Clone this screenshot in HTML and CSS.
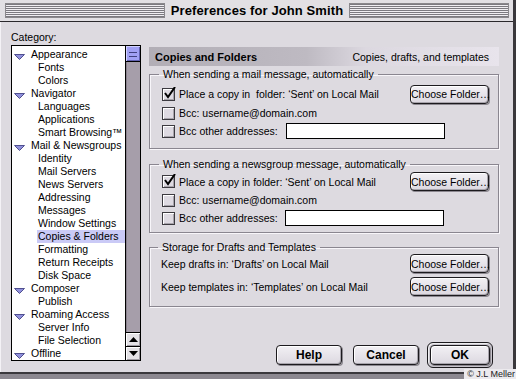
FILE: index.html
```html
<!DOCTYPE html>
<html lang="en">
<head>
  <meta charset="UTF-8">
  <title>Preferences for John Smith</title>
  <link rel="stylesheet" href="styles.css">
</head>
<body>
  <div class="window">
    <div class="titlebar">
      <span class="stripes"></span>
      <span class="title">Preferences for John Smith</span>
      <span class="stripes"></span>
    </div>

    <div class="main">
      <!-- Category tree -->
      <div class="sidebar">
        <div class="cat-label">Category:</div>
        <div class="listbox">
          <ul class="tree">
            <li class="parent"><svg class="twisty" viewBox="0 0 11 6"><path d="M0.5 0.5 H10.5 L5.5 5.5 Z"/></svg>Appearance</li>
            <li class="child"><span>Fonts</span></li>
            <li class="child"><span>Colors</span></li>
            <li class="parent"><svg class="twisty" viewBox="0 0 11 6"><path d="M0.5 0.5 H10.5 L5.5 5.5 Z"/></svg>Navigator</li>
            <li class="child"><span>Languages</span></li>
            <li class="child"><span>Applications</span></li>
            <li class="child"><span>Smart Browsing™</span></li>
            <li class="parent"><svg class="twisty" viewBox="0 0 11 6"><path d="M0.5 0.5 H10.5 L5.5 5.5 Z"/></svg>Mail &amp; Newsgroups</li>
            <li class="child"><span>Identity</span></li>
            <li class="child"><span>Mail Servers</span></li>
            <li class="child"><span>News Servers</span></li>
            <li class="child"><span>Addressing</span></li>
            <li class="child"><span>Messages</span></li>
            <li class="child"><span>Window Settings</span></li>
            <li class="child selected"><span>Copies &amp; Folders</span></li>
            <li class="child"><span>Formatting</span></li>
            <li class="child"><span>Return Receipts</span></li>
            <li class="child"><span>Disk Space</span></li>
            <li class="parent"><svg class="twisty" viewBox="0 0 11 6"><path d="M0.5 0.5 H10.5 L5.5 5.5 Z"/></svg>Composer</li>
            <li class="child"><span>Publish</span></li>
            <li class="parent"><svg class="twisty" viewBox="0 0 11 6"><path d="M0.5 0.5 H10.5 L5.5 5.5 Z"/></svg>Roaming Access</li>
            <li class="child"><span>Server Info</span></li>
            <li class="child"><span>File Selection</span></li>
            <li class="parent"><svg class="twisty" viewBox="0 0 11 6"><path d="M0.5 0.5 H10.5 L5.5 5.5 Z"/></svg>Offline</li>
          </ul>
          <div class="scrollbar">
            <div class="thumb"></div>
            <div class="track"></div>
            <div class="arrow"><svg viewBox="0 0 9 5"><path d="M4.5 0 L9 5 H0 Z"/></svg></div>
            <div class="arrow"><svg viewBox="0 0 9 5"><path d="M0 0 H9 L4.5 5 Z"/></svg></div>
          </div>
        </div>
      </div>

      <!-- Settings panel -->
      <div class="panel">
        <div class="panel-head">
          <span class="head-title">Copies and Folders</span>
          <span class="head-sub">Copies, drafts, and templates</span>
        </div>

        <fieldset class="group mail">
          <legend>When sending a mail message, automatically</legend>
          <div class="row row-btn">
            <span class="check on"><svg viewBox="0 0 13 13"><path d="M2 6 L5 10 L12 0"/></svg></span>
            <span class="label">Place a copy in&nbsp; folder: ‘Sent’ on Local Mail</span>
            <button class="btn">Choose Folder…</button>
          </div>
          <div class="row">
            <span class="check"></span>
            <span class="label">Bcc: username@domain.com</span>
          </div>
          <div class="row">
            <span class="check"></span>
            <span class="label">Bcc other addresses:</span>
            <span class="field"></span>
          </div>
        </fieldset>

        <fieldset class="group news">
          <legend>When sending a newsgroup message, automatically</legend>
          <div class="row row-btn">
            <span class="check on"><svg viewBox="0 0 13 13"><path d="M2 6 L5 10 L12 0"/></svg></span>
            <span class="label">Place a copy in folder: ‘Sent’ on Local Mail</span>
            <button class="btn">Choose Folder…</button>
          </div>
          <div class="row">
            <span class="check"></span>
            <span class="label">Bcc: username@domain.com</span>
          </div>
          <div class="row">
            <span class="check"></span>
            <span class="label">Bcc other addresses:</span>
            <span class="field field-2"></span>
          </div>
        </fieldset>

        <fieldset class="group storage">
          <legend>Storage for Drafts and Templates</legend>
          <div class="row row-btn">
            <span class="label">Keep drafts in: ‘Drafts’ on Local Mail</span>
            <button class="btn">Choose Folder…</button>
          </div>
          <div class="row row-btn">
            <span class="label">Keep templates in: ‘Templates’ on Local Mail</span>
            <button class="btn">Choose Folder…</button>
          </div>
        </fieldset>

        <div class="actions">
          <button class="btn big">Help</button>
          <button class="btn big">Cancel</button>
          <span class="default-ring"><button class="btn big">OK</button></span>
        </div>
      </div>
    </div>
  </div>
  <div class="credit">© J.L Meller</div>
</body>
</html>
```

FILE: styles.css
```css
body {
  margin: 0;
  width: 516px;
  height: 379px;
  background: #8c8890;
  font-family: "Liberation Sans", Arial, sans-serif;
  font-size: 10.5px;
  color: #000;
  overflow: hidden;
  position: relative;
}
.window {
  width: 513px;
  height: 372px;
  background: #dddae0;
  border-right: 3px solid #3a383c;
  border-bottom: 2px solid #3a383c;
  box-shadow: inset 1px 1px 0 #f4f2f6;
  overflow: hidden;
}

/* title bar */
.titlebar {
  height: 21px;
  border-bottom: 1px solid #2a282c;
  display: flex;
  align-items: center;
  gap: 6px;
  padding: 0 4px 0 5px;
  background: #e2e0e4;
}
.stripes {
  flex: 1;
  height: 15px;
  background: repeating-linear-gradient(to bottom, #7c7a80 0 1px, #f0eef2 1px 2px);
  border: 1px solid #8a888c;
  box-sizing: border-box;
}
.title {
  font-weight: bold;
  font-size: 13px;
  letter-spacing: 0.1px;
}

.main {
  display: flex;
  padding: 9px 0 0 11px;
}

/* category tree */
.sidebar {
  width: 130px;
}
.cat-label {
  line-height: 13px;
  height: 13px;
}
.listbox {
  margin-top: 1px;
  height: 314px;
  border: 1px solid #000;
  background: #fff;
  display: flex;
}
.tree {
  list-style: none;
  margin: 0;
  padding: 2px 0 0;
  flex: 1;
}
.tree li {
  height: 13px;
  line-height: 13px;
  white-space: nowrap;
}
.parent {
  padding-left: 2px;
  display: flex;
  align-items: center;
}
.twisty {
  width: 11px;
  height: 6px;
  margin: 4px 6px 0 0;
  fill: #9090dc;
  stroke: #505090;
  stroke-width: 1;
}
.child span {
  display: block;
  margin-left: 25px;
  padding-left: 1px;
}
.child.selected span {
  background: #cacaf6;
}

.scrollbar {
  width: 14px;
  border-left: 1px solid #000;
  display: flex;
  flex-direction: column;
  background: #a69eaa;
}
.thumb {
  height: 15px;
  border-bottom: 1px solid #000;
  background: repeating-linear-gradient(to bottom, #a0a0f4 0 3px, #404080 3px 4px) 3px 3px / 8px 9px no-repeat, #a0a0f4;
  box-shadow: inset 1px 1px 0 #d0d0ff, inset -1px -1px 0 #6060b0;
}
.track {
  flex: 1;
  box-shadow: inset 1px 0 0 #8a828e;
}
.arrow {
  height: 13px;
  border-top: 1px solid #000;
  background: #e4e2e6;
  box-shadow: inset 1px 1px 0 #fff, inset -1px -1px 0 #a09ca4;
  display: flex;
  align-items: center;
  justify-content: center;
}
.arrow svg {
  width: 9px;
  height: 5px;
  fill: #000;
}

/* right panel */
.panel {
  width: 350px;
  margin: 16px 0 0 8px;
}
.panel-head {
  height: 19px;
  display: flex;
  align-items: center;
  justify-content: space-between;
  padding: 0 10px 0 6px;
  background: linear-gradient(to right, #b2aeb6, #bebac2 45%, #dcd8e0 62%, #e8e4ec);
}
.head-title {
  font-weight: bold;
  font-size: 11px;
}

.group {
  margin: 2px 0 0;
  padding: 0 9px 0 12px;
  border: 1px solid #8a8690;
  box-shadow: inset 1px 1px 0 #f8f6fa, 1px 1px 0 #f8f6fa;
}
.group legend {
  padding: 0 4px;
  margin-left: -3px;
  line-height: 13px;
  height: 13px;
}
.row {
  display: flex;
  align-items: center;
  height: 18px;
}
.row-btn {
  height: 20px;
  margin-top: 3px;
}
.mail > .row:last-child {
  margin-bottom: 8px;
}

.news {
  margin-top: 9px;
}
.news .row-btn {
  height: 19px;
  margin-top: 1px;
}
.news > .row:last-child {
  margin-bottom: 5px;
}

.storage {
  margin-top: 8px;
  padding-left: 11px;
}
.storage .row-btn {
  height: 19px;
  margin-top: 0;
}
.storage .row-btn + .row-btn {
  margin-top: 4px;
}
.storage > .row:last-child {
  margin-bottom: 10px;
}

.check {
  width: 11px;
  height: 11px;
  border: 1px solid #3c3a40;
  background: #dedae2;
  box-shadow: inset 1px 1px 0 #fff, inset -1px -1px 0 #a8a4ac;
  margin-right: 4px;
  position: relative;
}
.check svg {
  position: absolute;
  left: 0;
  top: -2px;
  width: 13px;
  height: 13px;
  fill: none;
  stroke: #000;
  stroke-width: 2;
}
.label {
  white-space: nowrap;
}
.field {
  width: 157px;
  height: 14px;
  margin-left: 8px;
  background: #fff;
  border: 1px solid #000;
}
.field-2 {
  margin-left: 7px;
}

/* buttons */
.btn {
  margin-left: auto;
  width: 79px;
  height: 19px;
  padding: 0;
  white-space: nowrap;
  font-family: "Liberation Sans", Arial, sans-serif;
  font-size: 10.5px;
  color: #000;
  border: 1px solid #1c1a1e;
  border-radius: 4px;
  background: linear-gradient(to bottom, #f2f0f4, #dcd8e0);
  box-shadow: inset 1px 1px 0 #fff, inset -1px -1px 0 #a8a4ac, 1px 1px 0 #8c8890;
}

.actions {
  display: flex;
  align-items: center;
  justify-content: flex-end;
  margin: 35px 6px 0 0;
}
.btn.big {
  margin: 0;
  width: 66px;
  height: 20px;
  font-weight: bold;
  font-size: 12px;
}
.btn.big + .btn.big {
  margin-left: 11px;
}
.default-ring {
  display: flex;
  margin-left: 8px;
  padding: 2px;
  border: 1px solid #1c1a1e;
  border-radius: 6px;
  background: #c8c4cc;
  box-shadow: inset 1px 1px 0 #eeeef0;
}
.default-ring .btn.big {
  width: 60px;
}

.credit {
  position: absolute;
  right: 0;
  bottom: 0;
  padding: 0 1px 0 3px;
  background: #eceaee;
  font-size: 9px;
  line-height: 10px;
  color: #222;
}
```
